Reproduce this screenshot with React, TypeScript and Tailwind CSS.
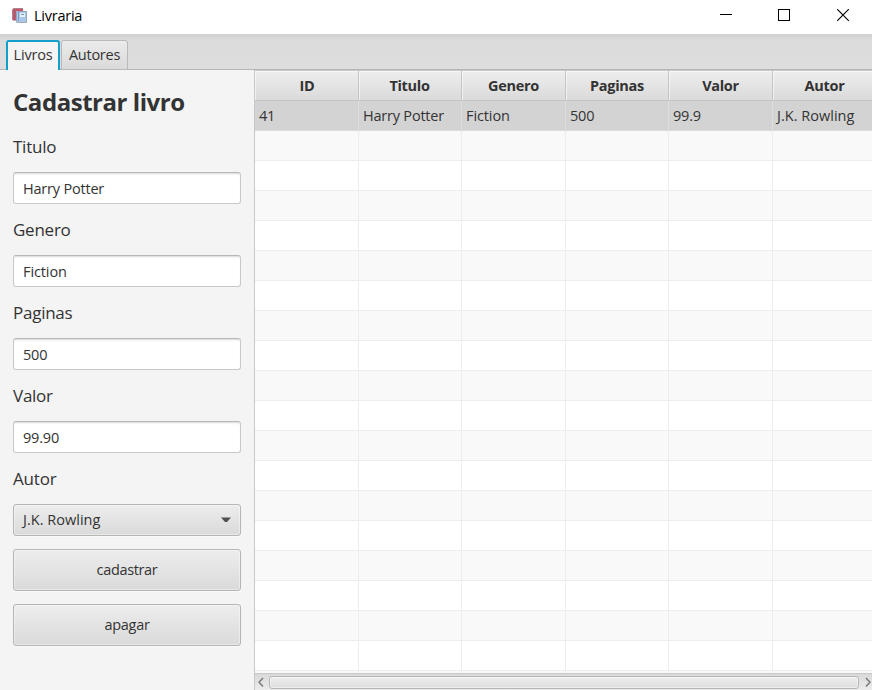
import React from "react";

const columns = [
  { title: "ID", value: "41", width: "w-[104px]", shift: "pl-px", cell: "tracking-[-0.3px]" },
  { title: "Titulo", value: "Harry Potter", width: "w-[103px]", shift: "pr-px", cell: "tracking-[-0.21px]" },
  { title: "Genero", value: "Fiction", width: "w-[104px]", shift: "", cell: "tracking-[-0.1px]" },
  { title: "Paginas", value: "500", width: "w-[103px]", shift: "", cell: "tracking-[-0.2px]" },
  { title: "Valor", value: "99.9", width: "w-[104px]", shift: "", cell: "tracking-[-0.2px]" },
  { title: "Autor", value: "J.K. Rowling", width: "w-[104px]", shift: "", cell: "tracking-[0.02px]" },
];

const fields = [
  { label: "Titulo", value: "Harry Potter", tracking: "tracking-[-0.2px]" },
  { label: "Genero", value: "Fiction", tracking: "tracking-[-0.1px]" },
  { label: "Paginas", value: "500", tracking: "tracking-[-0.2px]" },
  { label: "Valor", value: "99.90", tracking: "tracking-[-0.2px]" },
];

const raised =
  "rounded-[3px] border border-[#b5b5b5] bg-linear-to-b from-[#ededed] to-[#dadada] shadow-[inset_0_0_0_1px_rgba(255,255,255,0.4),0_1px_0_#fafafa]";

function TitleBar() {
  return (
    <header className="flex h-[34px] shrink-0 items-center bg-white pl-3">
      <svg width="16" height="16" viewBox="0 0 16 16" className="mb-[3px] shrink-0">
        <path d="M1 1h10v11H1z" fill="#cb5567" />
        <path d="M0.5 12V2a1.5 1.5 0 0 1 1.5-1.5h9" fill="none" stroke="#a8838d" />
        <path d="M2.5 1v10" stroke="#9a6475" />
        <path d="M1 12.5h4" stroke="#b5aeb4" />
        <rect x="4" y="3" width="11" height="12" rx="1" fill="#a9c8e8" />
        <path d="M4.5 14V4.5a1 1 0 0 1 1-1H14.5V14" fill="none" stroke="#93a5bd" />
        <path d="M6.5 4v9" stroke="#7f9cc2" />
        <rect x="8" y="5" width="5" height="4" fill="#e7f1fa" />
        <path d="M9 6.5h3" stroke="#6f91bd" />
        <path d="M5 14.5h10" stroke="#a9adb5" />
      </svg>
      <span className="mb-[3px] ml-[6px] text-[14.5px] tracking-[-0.25px] text-black">Livraria</span>
      <div className="mb-[4px] mr-[22px] ml-auto flex items-center">
        <svg width="13" height="13" fill="none" stroke="#000" className="mr-[45px]"><path d="M0 5.5h12" /></svg>
        <svg width="13" height="13" fill="none" stroke="#000" className="mr-[46px]"><rect x="0.5" y="0.5" width="11" height="11" /></svg>
        <svg width="13" height="13" fill="none" stroke="#000" strokeWidth="1.15"><path d="M0.2 0.2l11.6 11.6M11.8 0.2L0.2 11.8" /></svg>
      </div>
    </header>
  );
}

function Tabs() {
  return (
    <nav className="flex h-9 shrink-0 items-end bg-[linear-gradient(#cfcfcf_0px,#dcdcdc_6px,#dddddd_34px)] pl-[6px] shadow-[inset_0_-1px_0_#b5b5b5]">
      <div className="flex h-[30px] w-[54px] items-center justify-center rounded-t-[3px] border-2 border-b-0 border-[#129fcb] bg-[#f4f4f4] pb-[3px] text-[14.5px] tracking-[-0.2px]">Livros</div>
      <div className="ml-px flex h-[30px] w-[67px] items-center justify-center rounded-t-[3px] border border-[#b9b9b9] bg-linear-to-b from-[#ebebeb] to-[#dadada] text-[14.5px] tracking-[-0.25px]">Autores</div>
    </nav>
  );
}

function Form() {
  return (
    <aside className="w-[254px] shrink-0 bg-[#f4f4f4] px-[13px] pt-[13px]">
      <h1 className="h-[38px] text-[24px] leading-[38px] font-bold tracking-[-0.45px]">Cadastrar livro</h1>
      {fields.map((f) => (
        <div key={f.label} className="h-[83px] pt-[13px]">
          <div className="h-[25px] text-[17px] leading-[25px] tracking-[-0.25px]">{f.label}</div>
          <div className={`mt-[13px] flex h-8 w-[228px] items-center rounded-[3px] border border-[#c8c8c8] border-t-[#b7b7b7] bg-white pt-[2px] pl-[9px] text-[14.5px] shadow-[inset_0_2px_2px_-1px_rgba(0,0,0,0.15)] ${f.tracking}`}>{f.value}</div>
        </div>
      ))}
      <div className="mt-[13px] h-[25px] text-[17px] leading-[25px] tracking-[-0.2px]">Autor</div>
      <div className={`mt-[13px] flex h-8 w-[228px] items-center justify-between pr-[9px] pl-[9px] text-[14.5px] tracking-[0.02px] ${raised}`}>
        <span>J.K. Rowling</span>
        <svg width="10" height="6" fill="#505050"><path d="M0 0.5h10L6 5H4z" /></svg>
      </div>
      <button className={`mt-[13px] block h-[42px] w-[228px] text-[14.5px] tracking-[-0.35px] ${raised}`}>cadastrar</button>
      <button className={`mt-[13px] block h-[42px] w-[228px] text-[14.5px] tracking-[-0.3px] ${raised}`}>apagar</button>
    </aside>
  );
}

function Table() {
  return (
    <main className="flex min-w-0 flex-1 flex-col overflow-hidden border-l border-[#c8c8c8] bg-white">
      <div className="flex h-[31px] w-[622px] shrink-0 border-b border-[#c4c4c4] border-t border-t-[#c8c8c8]">
        {columns.map((c) => (
          <div key={c.title} className={`flex shrink-0 items-center justify-center border-r border-[#c4c4c4] bg-linear-to-b from-[#eeeeee] to-[#dadada] text-[14.5px] font-bold tracking-[-0.3px] shadow-[inset_1px_1px_0_rgba(255,255,255,0.55)] ${c.width} ${c.shift}`}>{c.title}</div>
        ))}
      </div>
      <div className="h-[572px] w-[622px] shrink-0 overflow-hidden">
        <div className="flex h-[30px] border-b border-[#dcdcdc] bg-[#d3d3d3]">
          {columns.map((c) => (
            <div key={c.title} className={`flex shrink-0 items-center border-r border-[#dedede] pl-1 text-[14.5px] whitespace-nowrap ${c.width} ${c.cell}`}>{c.value}</div>
          ))}
        </div>
        {Array.from({ length: 19 }, (_, i) => (
          <div key={i} className={`flex h-[30px] border-b border-[#ededed] ${i % 2 === 0 ? "bg-[#f9f9f9]" : "bg-white"}`}>
            {columns.map((c) => (
              <div key={c.title} className={`shrink-0 border-r border-[#ededed] ${c.width}`} />
            ))}
          </div>
        ))}
      </div>
      <div className="flex h-[17px] shrink-0 items-center border-t border-[#c8c8c8] bg-linear-to-b from-[#d9d9d9] to-[#ececec]">
        <svg width="14" height="14" fill="none" stroke="#777" strokeWidth="1.4" className="shrink-0"><path d="M8 3L4 7.3l4 4.3" /></svg>
        <div className="h-[13px] w-[590px] shrink-0 rounded-[3px] border border-[#b5b5b5] bg-linear-to-b from-[#eeeeee] to-[#dcdcdc] shadow-[inset_0_0_0_1px_rgba(255,255,255,0.5)]" />
        <svg width="13" height="14" fill="none" stroke="#777" strokeWidth="1.4" className="shrink-0"><path d="M7 3l4 4.3L7 11.6" /></svg>
      </div>
    </main>
  );
}

export default function App() {
  return (
    <div className="flex h-[690px] w-[872px] flex-col overflow-hidden bg-[#f4f4f4] font-['Open_Sans','Noto_Sans',sans-serif] text-[#333333]">
      <TitleBar />
      <Tabs />
      <div className="flex min-h-0 flex-1">
        <Form />
        <Table />
      </div>
    </div>
  );
}
